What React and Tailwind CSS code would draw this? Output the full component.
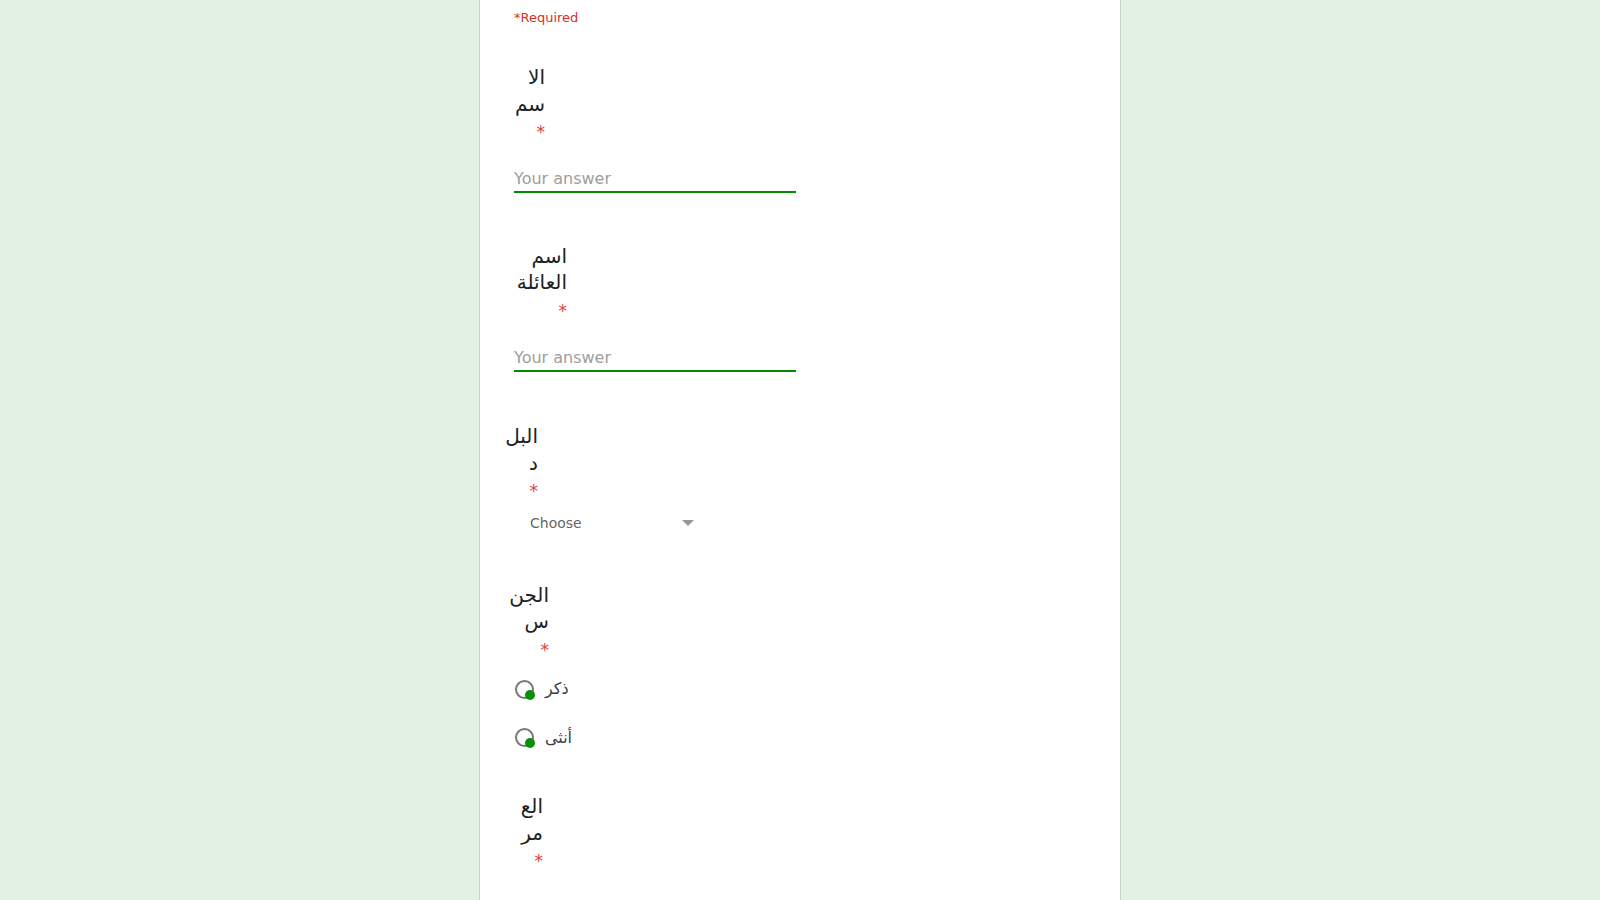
import React from "react";

const FONT = { fontFamily: '"DejaVu Sans", "Noto Sans", sans-serif' };

// Narrow RTL label, broken into the same lines as the picture
const Label = ({ lines, width, className = "" }) => (
  <div dir="rtl" className={`text-[20px] leading-[26.5px] text-[#202124] ${width} ${className}`}>
    {lines.map((l, i) => (
      <div key={i} className="whitespace-nowrap">
        {l}
      </div>
    ))}
    <div className="relative top-[2px] text-[17px] text-[#e0403a]">*</div>
  </div>
);

const TextAnswer = ({ className = "" }) => (
  <div className={`w-[282px] h-[27px] border-b-2 border-[#008a00] ${className}`}>
    <input
      type="text"
      placeholder="Your answer"
      className="w-full h-[25px] text-[16px] leading-[25px] outline-none placeholder:text-[#9e9e9e] bg-transparent"
      style={FONT}
    />
  </div>
);

const Radio = ({ label }) => (
  <div className="flex items-center h-[48.5px]">
    <div className="relative ml-[1px] w-[19px] h-[19px] rounded-full border-2 border-[#777]">
      <span className="absolute right-[-3px] bottom-[-3px] w-[10px] h-[10px] rounded-full bg-[#0a8f0a]" />
    </div>
    <span dir="rtl" className="ml-[11px] text-[16px] text-[#3c3c3c]">
      {label}
    </span>
  </div>
);

export default function App() {
  return (
    <div className="min-h-screen bg-[#e3f1e4] flex justify-center" style={FONT}>
      <div className="w-[642px] min-h-screen bg-white border-x border-[#c5d6c6] pl-[34px] pb-10">
        <div className="pt-[10px] text-[13px] leading-[16px] text-[#d93025]">*Required</div>

        <Label lines={["الا", "سم"]} width="w-[31px]" className="mt-[38px]" />
        <TextAnswer className="mt-[22px]" />

        <Label lines={["اسم", "العائلة"]} width="w-[53px]" className="mt-[50px]" />
        <TextAnswer className="mt-[23px]" />

        <Label lines={["البل", "د"]} width="w-[24px]" className="mt-[51px]" />
        <div className="w-[196px] h-[41px] pl-[16px] pr-[16px] flex items-center justify-between">
          <span className="text-[14px] text-[#666]">Choose</span>
          <svg width="12" height="6" viewBox="0 0 12 6">
            <path d="M0 0 L12 0 L6 6 Z" fill="#999" />
          </svg>
        </div>

        <Label lines={["الجن", "س"]} width="w-[35px]" className="mt-[38px]" />
        <div className="mt-[4px]">
          <Radio label="ذكر" />
          <Radio label="أنثى" />
        </div>

        <Label lines={["الع", "مر"]} width="w-[29px]" className="mt-[31px]" />
      </div>
    </div>
  );
}
